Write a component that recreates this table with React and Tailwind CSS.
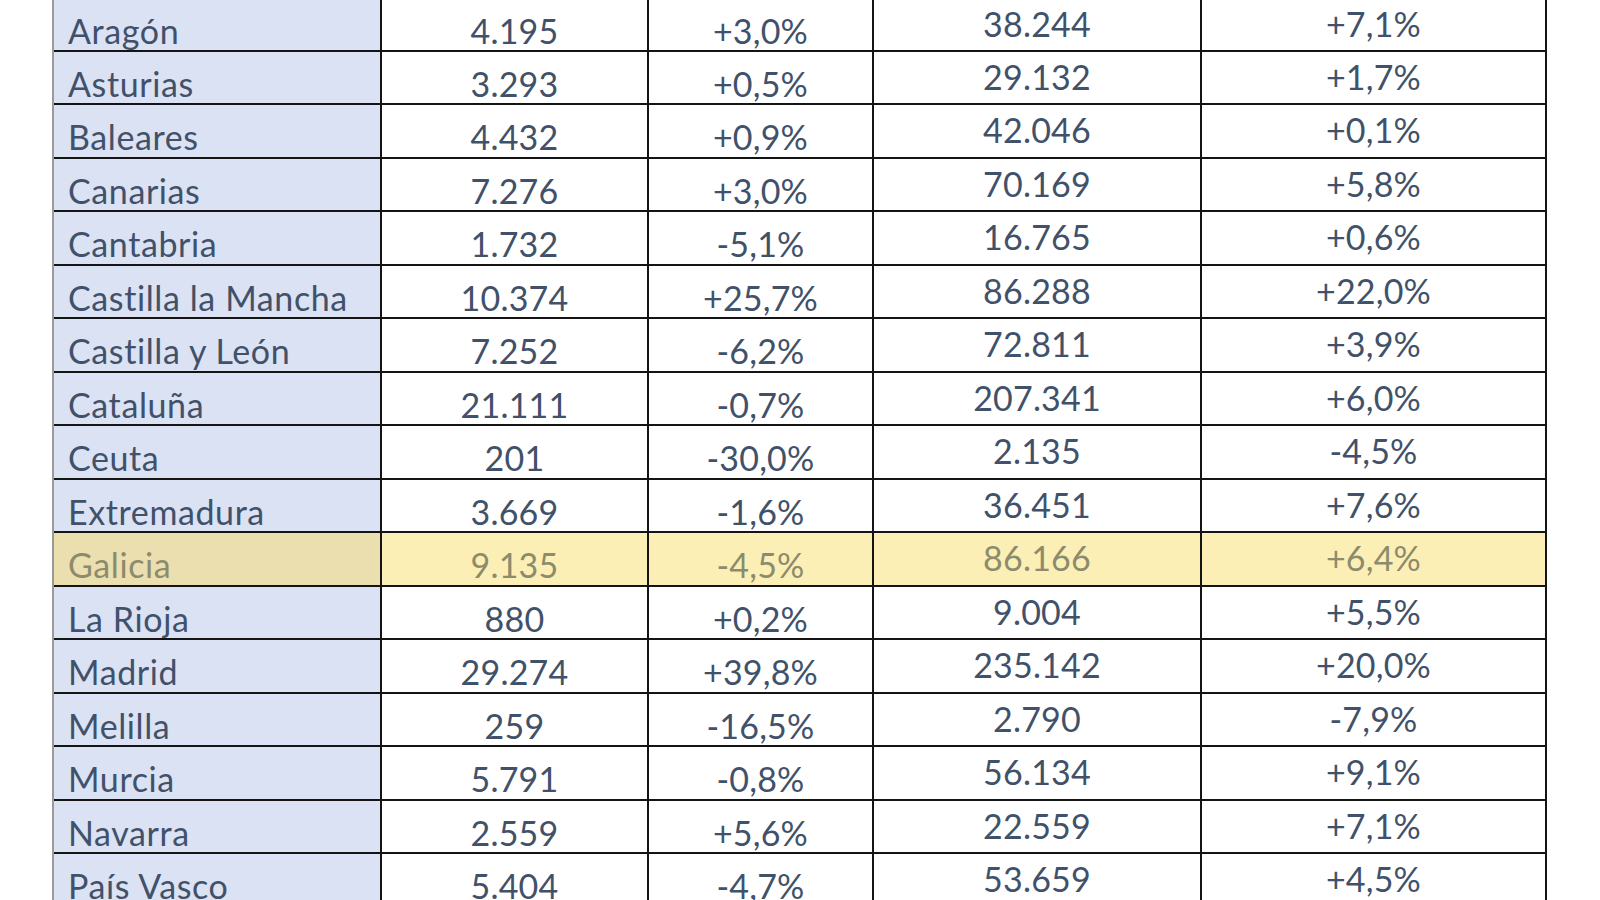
import React from "react";

const rows = [
  ["Aragón", "4.195", "+3,0%", "38.244", "+7,1%"],
  ["Asturias", "3.293", "+0,5%", "29.132", "+1,7%"],
  ["Baleares", "4.432", "+0,9%", "42.046", "+0,1%"],
  ["Canarias", "7.276", "+3,0%", "70.169", "+5,8%"],
  ["Cantabria", "1.732", "-5,1%", "16.765", "+0,6%"],
  ["Castilla la Mancha", "10.374", "+25,7%", "86.288", "+22,0%"],
  ["Castilla y León", "7.252", "-6,2%", "72.811", "+3,9%"],
  ["Cataluña", "21.111", "-0,7%", "207.341", "+6,0%"],
  ["Ceuta", "201", "-30,0%", "2.135", "-4,5%"],
  ["Extremadura", "3.669", "-1,6%", "36.451", "+7,6%"],
  ["Galicia", "9.135", "-4,5%", "86.166", "+6,4%", true],
  ["La Rioja", "880", "+0,2%", "9.004", "+5,5%"],
  ["Madrid", "29.274", "+39,8%", "235.142", "+20,0%"],
  ["Melilla", "259", "-16,5%", "2.790", "-7,9%"],
  ["Murcia", "5.791", "-0,8%", "56.134", "+9,1%"],
  ["Navarra", "2.559", "+5,6%", "22.559", "+7,1%"],
  ["País Vasco", "5.404", "-4,7%", "53.659", "+4,5%"],
];

function Row({ r }) {
  const hl = r[5];
  const txt = hl ? "text-[#8c8b6c]" : "text-[#41516a]";
  const cellBg = hl ? "bg-[#fcefb6]" : "bg-white";
  return (
    <div className="grid grid-cols-[328px_267px_225px_328px_345px] h-[53.47px] border-b-2 border-[#141414]">
      <div className={`border-r-2 border-[#141414] pl-[14px] pt-[13px] whitespace-nowrap tracking-[0.6px] ${hl ? "bg-[#ebdfb0]" : "bg-[#dbe2f3]"} ${txt}`}>
        {r[0]}
      </div>
      <div className={`border-r-2 border-[#141414] pt-[13px] text-center ${cellBg} ${txt}`}>{r[1]}</div>
      <div className={`border-r-2 border-[#141414] pt-[13px] text-center ${cellBg} ${txt}`}>{r[2]}</div>
      <div className={`border-r-2 border-[#141414] pt-[6px] text-center ${cellBg} ${txt}`}>{r[3]}</div>
      <div className={`border-r-2 border-[#141414] pt-[6px] text-center ${cellBg} ${txt}`}>{r[4]}</div>
    </div>
  );
}

export default function App() {
  return (
    <div className="w-[1600px] h-[900px] overflow-hidden bg-white font-['Lato',sans-serif] text-[34px] leading-[37px] tracking-[0.2px]">
      <div className="ml-[52px] mt-[-3.5px] w-[1495px] border-l-2 border-t-2 border-[#9a9a9a]">
        {rows.map((r) => (
          <Row key={r[0]} r={r} />
        ))}
      </div>
    </div>
  );
}
